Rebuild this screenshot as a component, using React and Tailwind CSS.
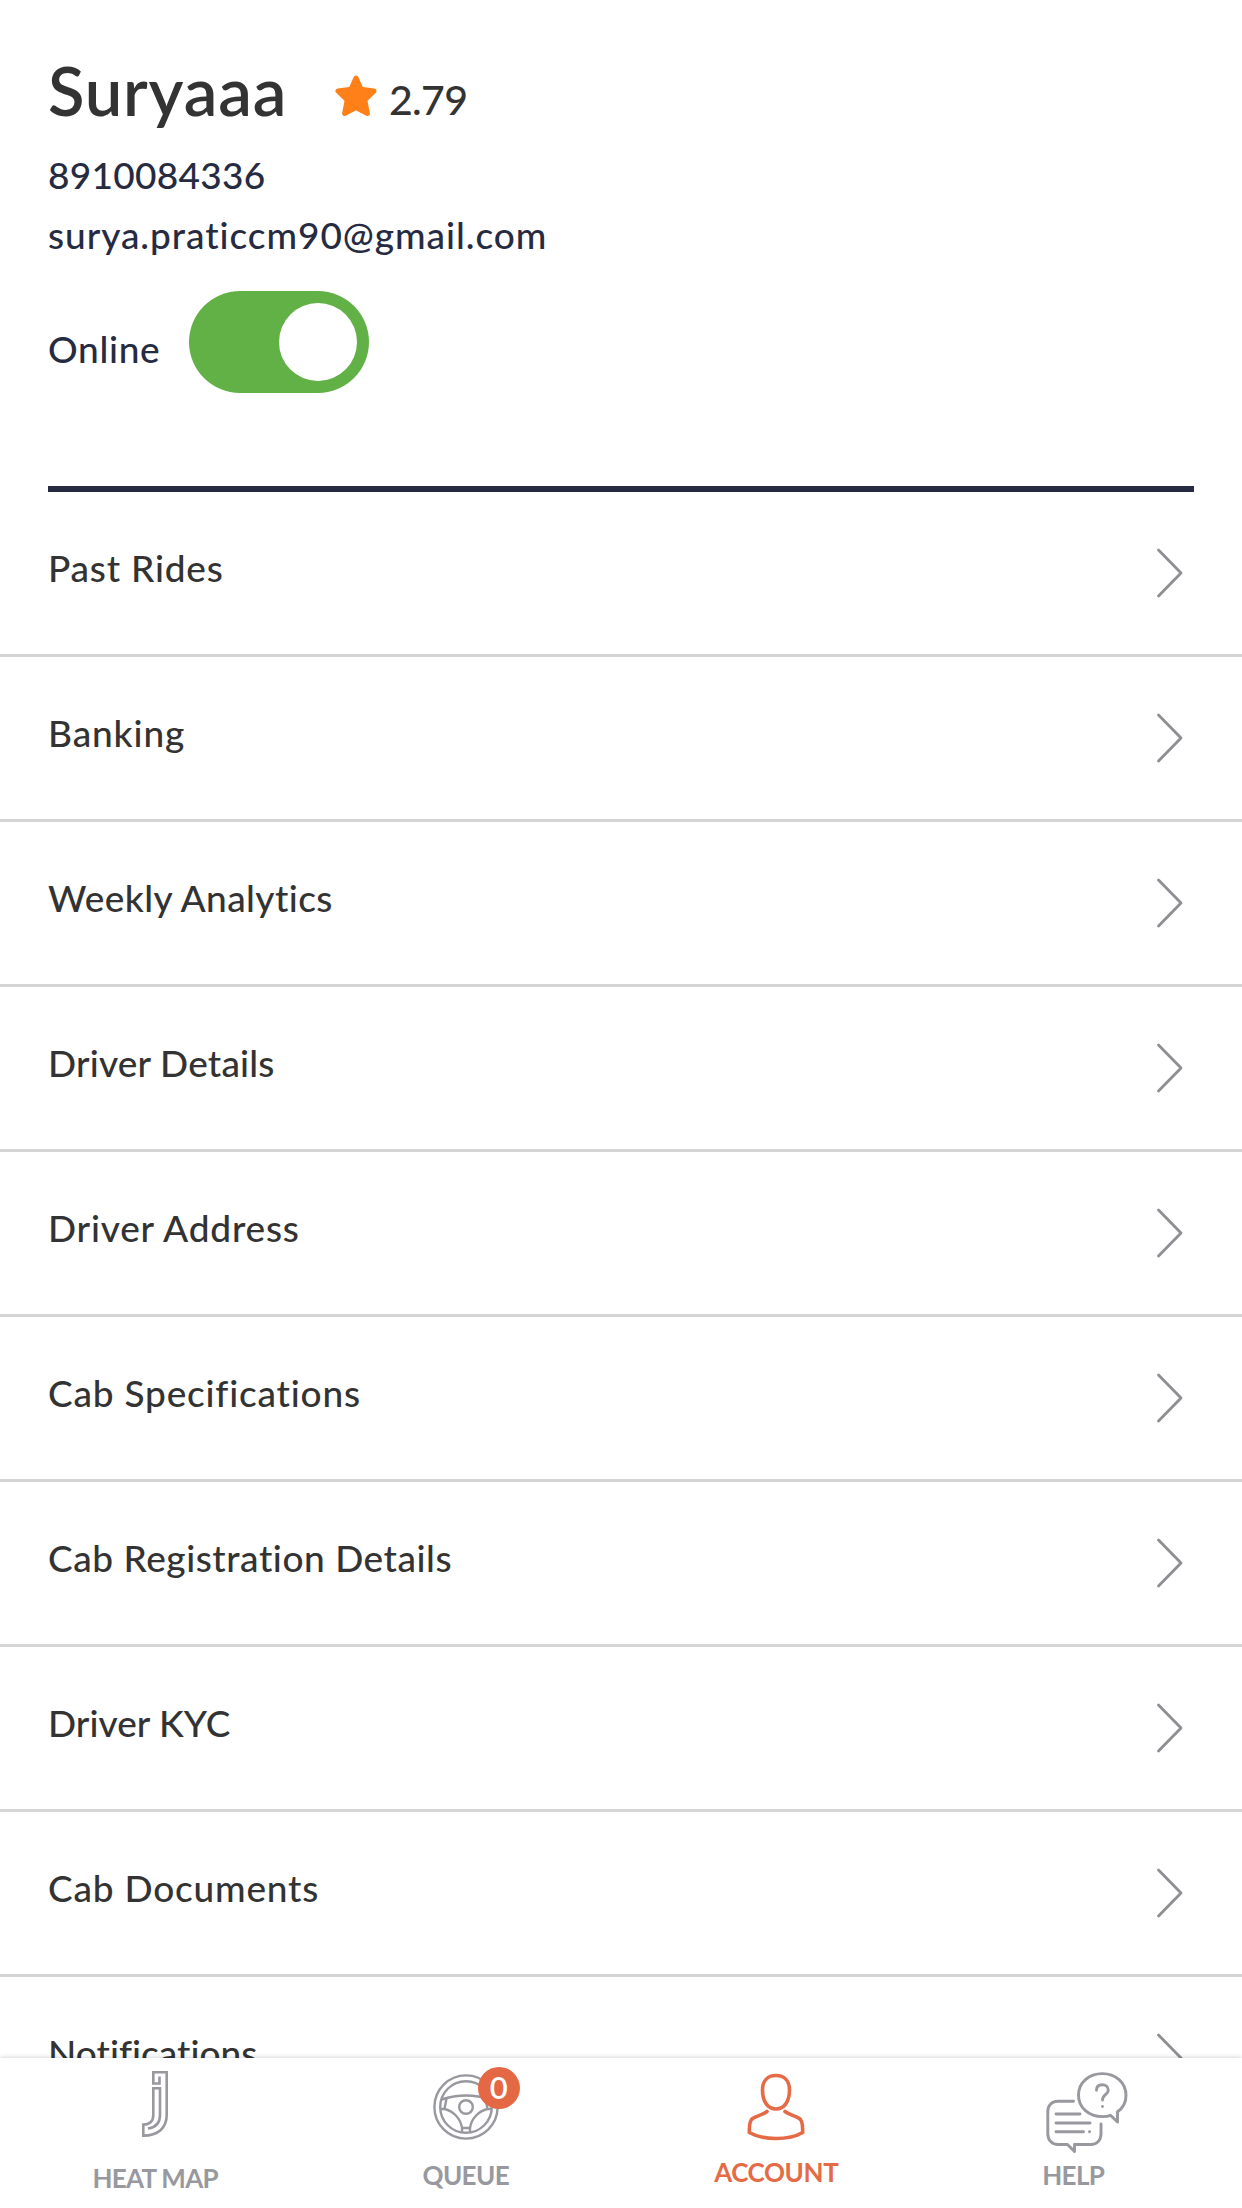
const menuItems = [
  { label: 'Past Rides', tracking: 'tracking-[0.8px]' },
  { label: 'Banking', tracking: 'tracking-[0.9px]' },
  { label: 'Weekly Analytics', tracking: 'tracking-[0.4px]' },
  { label: 'Driver Details', tracking: 'tracking-[0.2px]' },
  { label: 'Driver Address', tracking: 'tracking-[0.8px]' },
  { label: 'Cab Specifications', tracking: 'tracking-[0.8px]' },
  { label: 'Cab Registration Details', tracking: 'tracking-[0.55px]' },
  { label: 'Driver KYC', tracking: 'tracking-[0.05px]' },
  { label: 'Cab Documents', tracking: 'tracking-[0.8px]' },
  { label: 'Notifications', tracking: 'tracking-[0.02px]' },
]

function StarIcon() {
  return (
    <svg className="w-[42px] h-[42px] shrink-0" viewBox="0 0 42 42" fill="#ff8018" stroke="#ff8018" strokeWidth="5" strokeLinejoin="round">
      <path d="M21 3L26 14.2L39 16L29.8 25L32.4 38.5L21 32.5L9.6 38.5L12.2 25L3 16L16 14.2Z" />
    </svg>
  )
}

function ChevronIcon() {
  return (
    <svg className="w-[28px] h-[52px] shrink-0" viewBox="0 0 28 52" fill="none" stroke="#8e8e93" strokeWidth="2.8" strokeLinecap="round" strokeLinejoin="round">
      <path d="M2.5 3L25 26L2.5 49" />
    </svg>
  )
}

function HeatMapIcon() {
  return (
    <svg className="w-[26px] h-[66px]" viewBox="0 0 26 66" fill="none" stroke="#98989f" strokeWidth="2.6">
      <path d="M17.5 5.5V12.5H11.3V1.3H24.7V44C24.7 57 16 64.6 1.3 64.6V53.5C8 53.5 11.3 50 11.3 44V17.3H18V44C18 52 13.5 56.5 6 57.5" />
    </svg>
  )
}

function WheelIcon() {
  return (
    <svg className="w-[66px] h-[66px]" viewBox="0 0 66 66" fill="none" stroke="#98989f" strokeWidth="2.4">
      <circle cx="33" cy="33" r="31.6" />
      <circle cx="33" cy="33" r="25.8" />
      <circle cx="33" cy="33" r="6.8" />
      <path d="M8.5 25.5C24 20.5 42 20.5 57.5 25.5" />
      <path d="M7.5 35H11.5C20 37 27.5 44 29 54V58.5" />
      <path d="M58.5 35H54.5C46 37 38.5 44 37 54V58.5" />
      <path d="M13.5 24.5L11.5 35M52.5 24.5L54.5 35M29 54H37" />
    </svg>
  )
}

function AccountIcon() {
  return (
    <svg className="w-[58px] h-[68px]" viewBox="0 0 58 68" fill="none" stroke="#e46b45" strokeWidth="3.6" strokeLinecap="round" strokeLinejoin="round">
      <path d="M29 2.5C37.5 2.5 42.5 8 42.5 17C42.5 28 37.5 36 29 36C20.5 36 15.5 28 15.5 17C15.5 8 20.5 2.5 29 2.5Z" />
      <path d="M20 38.5C14 43 7.5 43 4.5 46.5C2.5 49 2.3 54 2.3 59.5C16 67.5 42 67.5 55.7 59.5C55.7 54 55.5 49 53.5 46.5C50.5 43 44 43 38 38.5" />
    </svg>
  )
}

function HelpIcon() {
  return (
    <svg className="w-[82px] h-[82px]" viewBox="0 0 82 82" fill="none" stroke="#98989f" strokeWidth="2.9" strokeLinecap="round" strokeLinejoin="round">
      <path d="M27.5 29.2H12C6 29.2 1.8 33.5 1.8 39.5V62C1.8 68 6 72.5 12 72.5H21.5L28.5 79.5V72.5H45C51 72.5 55 68 55 62V52" />
      <path d="M10 42H34M10 51H44M10 59.7H37.5M43.5 59.7H43.6" />
      <path d="M71.5 39.8C77 36 80 30 80 23.5C80 10.5 69.5 1.6 56.3 1.6C43 1.6 32.5 10.5 32.5 23C32.5 36 43 44.6 56.3 44.6C59.5 44.6 62 44.3 64.5 43.3L71.5 50Z" />
      <path d="M50.5 18.2C50.5 14.5 53 12.8 56.3 12.8C59.8 12.8 62.3 15 62.3 18.3C62.3 22.5 56.5 22.5 56.5 28M56.5 34.5V34.6" />
    </svg>
  )
}

export default function App() {
  return (
    <div className="w-[1242px] h-[2208px] bg-white overflow-hidden flex flex-col font-['Lato',sans-serif] font-medium text-[#333333] whitespace-nowrap">
      {/* Profile */}
      <header className="mx-12 h-[492px] shrink-0 pt-[51px] flex flex-col border-b-6 border-[#272b41] text-[#272b41] text-[37px] leading-[60px]">
        <div className="flex h-[78px] mb-4 text-[#333333]">
          <h1 className="w-[287px] text-[67px] leading-[78px] font-semibold tracking-[0.8px]">Suryaaa</h1>
          <div className="flex pt-[24px]">
            <StarIcon />
            <span className="ml-[12px] text-[41px] leading-[49px] tracking-[-0.7px]">2.79</span>
          </div>
        </div>
        <p className="tracking-[0.3px]">8910084336</p>
        <p className="tracking-[0.95px]">surya.praticcm90@gmail.com</p>
        <div className="flex mt-[26px]">
          <span className="w-[141px] pt-[28px] tracking-[0.7px]">Online</span>
          <button className="w-[180px] h-[102px] rounded-full bg-[#62b146] p-3 flex justify-end">
            <span className="size-[78px] rounded-full bg-white" />
          </button>
        </div>
      </header>

      {/* Menu */}
      <main className="h-[1566px] overflow-hidden">
        {menuItems.map((item) => (
          <div key={item.label} className="h-[165px] border-b-3 border-[#d5d5d5] pl-12 pr-[58px] flex items-center justify-between">
            <span className={`text-[37px] leading-[44px] pb-[10px] ${item.tracking}`}>{item.label}</span>
            <ChevronIcon />
          </div>
        ))}
      </main>

      {/* Tab bar */}
      <nav className="relative h-[150px] grid grid-cols-4 bg-white shadow-[0_0_5px_rgba(0,0,0,0.22)] text-[#98989f] text-[26px] leading-[32px] font-bold">
        <div className="flex flex-col items-center pt-[13px]">
          <HeatMapIcon />
          <span className="mt-[25px] tracking-[-0.7px] word-spacing-[2px]">HEAT MAP</span>
        </div>
        <div className="flex flex-col items-center pt-[16px]">
          <div className="relative">
            <WheelIcon />
            <span className="absolute -top-[7px] left-[45px] size-[42px] rounded-full bg-[#e46843] text-white text-[31px] leading-[41px] text-center font-semibold">0</span>
          </div>
          <span className="mt-[19px] tracking-[-0.6px]">QUEUE</span>
        </div>
        <div className="flex flex-col items-center pt-[15px] text-[#e46b45]">
          <AccountIcon />
          <span className="mt-[15px] tracking-[-0.4px]">ACCOUNT</span>
        </div>
        <div className="flex flex-col items-center pt-[14px]">
          <HelpIcon />
          <span className="mt-[5px] mr-[27px] tracking-[-0.6px]">HELP</span>
        </div>
      </nav>
    </div>
  )
}
